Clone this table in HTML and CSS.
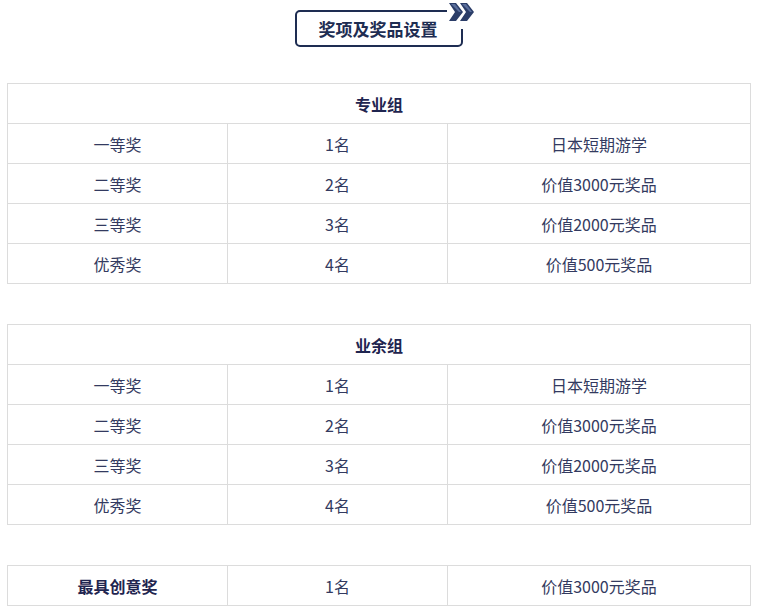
FILE: index.html
```html
<!DOCTYPE html>
<html lang="zh-CN">
<head>
<meta charset="utf-8">
<link rel="stylesheet" href="styles.css">
</head>
<body>
<div class="page">
  <div class="title-row">
    <div class="title-box">
      <span class="title-text">奖项及奖品设置</span>
      <svg class="chev" width="30" height="28" viewBox="0 0 30 28">
        <rect x="0" y="6" width="30" height="22" fill="#fff"/>
        <polygon points="2,2 9,2 16,11 9,20 2,20 8,11" fill="#2b3d68"/>
        <polygon points="13,2 20,2 27,11 20,20 13,20 19,11" fill="#2b3d68"/>
        <polygon points="4,3 8,3 14,11 12,11" fill="#5a6f9c"/>
        <polygon points="15,3 19,3 25,11 23,11" fill="#5a6f9c"/>
      </svg>
    </div>
  </div>

  <table class="prize">
    <colgroup><col class="c1"><col class="c2"><col class="c3"></colgroup>
    <tr><th colspan="3">专业组</th></tr>
    <tr><td>一等奖</td><td>1名</td><td>日本短期游学</td></tr>
    <tr><td>二等奖</td><td>2名</td><td>价值3000元奖品</td></tr>
    <tr><td>三等奖</td><td>3名</td><td>价值2000元奖品</td></tr>
    <tr><td>优秀奖</td><td>4名</td><td>价值500元奖品</td></tr>
  </table>

  <table class="prize">
    <colgroup><col class="c1"><col class="c2"><col class="c3"></colgroup>
    <tr><th colspan="3">业余组</th></tr>
    <tr><td>一等奖</td><td>1名</td><td>日本短期游学</td></tr>
    <tr><td>二等奖</td><td>2名</td><td>价值3000元奖品</td></tr>
    <tr><td>三等奖</td><td>3名</td><td>价值2000元奖品</td></tr>
    <tr><td>优秀奖</td><td>4名</td><td>价值500元奖品</td></tr>
  </table>

  <table class="prize">
    <colgroup><col class="c1"><col class="c2"><col class="c3"></colgroup>
    <tr><td class="bold">最具创意奖</td><td>1名</td><td>价值3000元奖品</td></tr>
  </table>
</div>
</body>
</html>
```

FILE: styles.css
```css
html, body {
  margin: 0;
  padding: 0;
  background: #fff;
}
body {
  font-family: "Noto Sans CJK SC", "Noto Sans", sans-serif;
  color: #333a60;
}
.page {
  padding: 10px 8px 0 7px;
}
.title-row {
  display: flex;
  justify-content: center;
  margin-left: 1px;
}
.title-box {
  position: relative;
  width: 164px;
  height: 33px;
  border: 2px solid #1e2d52;
  border-radius: 5px;
  display: flex;
  align-items: center;
  justify-content: center;
}
.title-text {
  font-size: 17px;
  font-weight: bold;
  color: #1e2d52;
  line-height: 1;
  margin-right: 2px;
}
.chev {
  position: absolute;
  left: 150px;
  top: -11px;
}
.prize {
  width: 744px;
  border-collapse: collapse;
  table-layout: fixed;
  margin-top: 36px;
  font-size: 16px;
}
.prize + .prize {
  margin-top: 40px;
}
.prize th, .prize td {
  border: 1px solid #dcdcdc;
  height: 39px;
  padding: 0;
  text-align: center;
  line-height: 1;
}
.prize th {
  font-weight: bold;
  font-size: 16px;
  color: #1f2550;
}
.c1 { width: 220px; }
.c2 { width: 220px; }
.bold {
  font-weight: bold;
  color: #1f2550;
}
```
